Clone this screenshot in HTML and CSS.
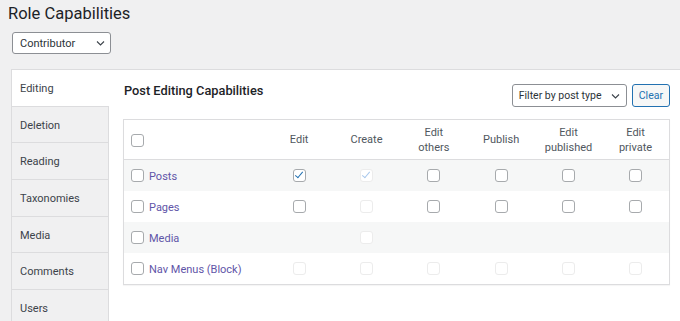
FILE: index.html
```html
<!DOCTYPE html>
<html lang="en">
<head>
  <meta charset="UTF-8">
  <title>Role Capabilities</title>
  <link rel="stylesheet" href="styles.css">
</head>
<body>

  <h1 class="page-title">Role Capabilities</h1>

  <div class="select role-select">
    <span>Contributor</span>
    <svg class="chevron" width="9" height="6" viewBox="0 0 9 6"><path d="M1 1.5l3.5 3.5 3.5-3.5" fill="none" stroke="#3c434a" stroke-width="1.1"/></svg>
  </div>

  <div class="panel">
    <div class="tabs">
      <div class="tab active">Editing</div>
      <div class="tab">Deletion</div>
      <div class="tab">Reading</div>
      <div class="tab">Taxonomies</div>
      <div class="tab">Media</div>
      <div class="tab">Comments</div>
      <div class="tab">Users</div>
    </div>

    <div class="content">
      <div class="content-head">
        <h2>Post Editing Capabilities</h2>
        <div class="controls">
          <div class="select filter-select">
            <span>Filter by post type</span>
            <svg class="chevron" width="9" height="6" viewBox="0 0 9 6"><path d="M1 1.5l3.5 3.5 3.5-3.5" fill="none" stroke="#3c434a" stroke-width="1.1"/></svg>
          </div>
          <button class="clear-btn">Clear</button>
        </div>
      </div>

      <table class="caps">
        <colgroup>
          <col class="col-name">
          <col><col><col><col><col><col>
        </colgroup>
        <thead>
          <tr>
            <th class="name"><span class="cb"></span></th>
            <th>Edit</th>
            <th>Create</th>
            <th>Edit<br>others</th>
            <th>Publish</th>
            <th>Edit<br>published</th>
            <th>Edit<br>private</th>
          </tr>
        </thead>
        <tbody>
          <tr class="alt">
            <td class="name"><span class="cb"></span><a href="#">Posts</a></td>
            <td><span class="cb checked"></span></td>
            <td><span class="cb disabled checked"></span></td>
            <td><span class="cb"></span></td>
            <td><span class="cb"></span></td>
            <td><span class="cb"></span></td>
            <td><span class="cb"></span></td>
          </tr>
          <tr>
            <td class="name"><span class="cb"></span><a href="#">Pages</a></td>
            <td><span class="cb"></span></td>
            <td><span class="cb disabled"></span></td>
            <td><span class="cb"></span></td>
            <td><span class="cb"></span></td>
            <td><span class="cb"></span></td>
            <td><span class="cb"></span></td>
          </tr>
          <tr class="alt">
            <td class="name"><span class="cb"></span><a href="#">Media</a></td>
            <td></td>
            <td><span class="cb disabled"></span></td>
            <td></td>
            <td></td>
            <td></td>
            <td></td>
          </tr>
          <tr>
            <td class="name"><span class="cb"></span><a href="#">Nav Menus (Block)</a></td>
            <td><span class="cb disabled"></span></td>
            <td><span class="cb disabled"></span></td>
            <td><span class="cb disabled"></span></td>
            <td><span class="cb disabled"></span></td>
            <td><span class="cb disabled"></span></td>
            <td><span class="cb disabled"></span></td>
          </tr>
        </tbody>
      </table>
    </div>
  </div>

</body>
</html>
```

FILE: styles.css
```css
body {
  margin: 0;
  background: #f0f0f1;
  font-family: 'Roboto', 'Noto Sans', sans-serif;
  font-size: 11px;
  color: #3c434a;
  overflow: hidden;
}

.page-title {
  margin: 0;
  padding: 2px 0 0 8px;
  font-size: 16.5px;
  font-weight: 400;
  line-height: 24px;
  color: #1d2327;
}

.select {
  display: flex;
  align-items: center;
  justify-content: space-between;
  box-sizing: border-box;
  background: #fff;
  border: 1px solid #8c8f94;
  border-radius: 3px;
  color: #2c3338;
  font-size: 11px;
}

.role-select {
  width: 99px;
  height: 22px;
  margin: 6px 0 0 12px;
  padding: 0 5px 0 7px;
}

.filter-select {
  width: 115px;
  height: 23px;
  padding: 0 6px 0 6px;
  font-size: 10.5px;
}

.panel {
  display: flex;
  margin: 15px -1px 0 11px;
  height: 260px;
  background: #fff;
  border: 1px solid #dcdcde;
  border-bottom: none;
}

.tabs {
  width: 96px;
  flex-shrink: 0;
  background: #f0f0f1;
  border-right: 1px solid #dcdcde;
}

.tab {
  box-sizing: border-box;
  height: 36.7px;
  padding: 0 8px;
  line-height: 37px;
  border-bottom: 1px solid #dcdcde;
  color: #3c434a;
  font-size: 11px;
}

.tab.active {
  background: #fff;
  margin-right: -1px;
}

.content {
  padding: 14px 0 0 14px;
}

.content-head {
  display: flex;
  justify-content: space-between;
  width: 547px;
}

.content-head h2 {
  margin: 0 0 0 1px;
  font-size: 12.8px;
  line-height: 14px;
  font-weight: 500;
  color: #1d2327;
}

.controls {
  display: flex;
  gap: 5px;
}

.clear-btn {
  height: 23px;
  padding: 0 6px;
  background: #f6f7f7;
  border: 1px solid #2271b1;
  border-radius: 3px;
  color: #2271b1;
  font-family: inherit;
  font-size: 10.5px;
}

.caps {
  margin-top: 12px;
  width: 547px;
  table-layout: fixed;
  border-collapse: collapse;
  border: 1px solid #dcdcde;
  box-shadow: 0 1px 1px rgba(0, 0, 0, 0.04);
}

.caps .col-name {
  width: 142px;
}

.caps th {
  height: 39px;
  padding: 0;
  font-weight: 400;
  font-size: 11px;
  line-height: 15px;
  color: #50575e;
  text-align: center;
  border-bottom: 1px solid #dcdcde;
}

.caps td {
  height: 31px;
  padding: 0;
  text-align: center;
}

.caps .name {
  text-align: left;
  padding-left: 7px;
}

.caps tr.alt td {
  background: #f6f7f7;
}

.caps a {
  color: #5f55a8;
  text-decoration: none;
  font-size: 11px;
  vertical-align: middle;
}

.cb {
  display: inline-block;
  position: relative;
  box-sizing: border-box;
  width: 13px;
  height: 13px;
  border: 1px solid #a7aaad;
  border-radius: 3px;
  background: #fff;
  vertical-align: middle;
}

.name .cb {
  margin-right: 5px;
}

.cb.disabled {
  border-color: #ececec;
}

.cb.checked::after {
  content: '';
  position: absolute;
  left: 3px;
  top: 0px;
  width: 3px;
  height: 7px;
  border: solid #2271b1;
  border-width: 0 1.6px 1.6px 0;
  transform: rotate(40deg);
}

.cb.disabled.checked::after {
  border-color: #a8c8ec;
}
```
